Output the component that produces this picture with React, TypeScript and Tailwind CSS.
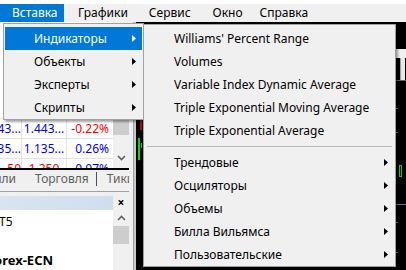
import React from "react";

const font = { fontFamily: '"Noto Sans", "Liberation Sans", sans-serif' };

const Arrow = ({ white }: { white?: boolean }) => (
  <svg width="4" height="7" viewBox="0 0 4 7" className="shrink-0">
    <path d="M0 0 L4 3.5 L0 7 Z" fill={white ? "#ffffff" : "#000000"} />
  </svg>
);

const MenuItem = ({
  label,
  active,
  sub,
}: {
  label: string;
  active?: boolean;
  sub?: boolean;
}) => (
  <div
    className={`flex items-center h-[23px] pr-[6px] pl-[29px] ${
      active ? "bg-[#0078d7] text-white" : "text-black"
    }`}
  >
    <span className="flex-1 whitespace-nowrap">{label}</span>
    {sub && <Arrow white={active} />}
  </div>
);

const rows = [
  { a: "43...", b: "1.443...", c: "-0.22%", ca: "text-[#0000ff]", cb: "text-[#0000ff]", cc: "text-[#ff0000]" },
  { a: "35...", b: "1.135...", c: "0.26%", ca: "text-[#0000ff]", cb: "text-[#0000ff]", cc: "text-[#0000ff]" },
  { a: "50", b: "1.250", c: "0.07%", ca: "text-[#ff0000]", cb: "text-[#ff0000]", cc: "text-[#0000ff]" },
];

const TabSep = () => <div className="w-px h-[14px] bg-[#505050]" />;

export default function App() {
  return (
    <div className="relative w-[406px] h-[270px] overflow-hidden bg-[#f0f0f0] text-[12px]" style={font}>
      {/* menu bar */}
      <div className="flex items-end h-[22px] bg-white">
        <div className="flex h-[18px] w-full items-center bg-[#f0f0f0]">
          <div className="flex items-center h-[18px] w-[64px] pl-[12px] bg-[#0078d7] text-white">Вставка</div>
          <span className="ml-[14px]">Графики</span>
          <span className="ml-[21px]">Сервис</span>
          <span className="ml-[22px]">Окно</span>
          <span className="ml-[17px]">Справка</span>
        </div>
      </div>

      {/* workspace */}
      <div className="flex h-[248px]">
        {/* left panel */}
        <div className="flex flex-col w-[129px]">
          <div className="flex h-[146px]">
            <div className="flex flex-col flex-1 pt-[96px] bg-white overflow-hidden">
              {rows.map((r, i) => (
                <div key={i} className="flex h-[20px] shrink-0 border-t border-[#e3e3e3] items-center">
                  <div className={`w-[22px] border-r border-[#e3e3e3] h-full flex items-center justify-end ${r.ca}`}>{r.a}</div>
                  <div className={`w-[45px] border-r border-[#e3e3e3] h-full flex items-center justify-center ${r.cb}`}>{r.b}</div>
                  <div className={`flex-1 h-full flex items-center justify-end pr-[4px] ${r.cc}`}>{r.c}</div>
                </div>
              ))}
            </div>
            <div className="flex flex-col w-[16px] bg-[#f0f0f0]">
              <div className="h-[96px]" />
              <div className="h-[17px] bg-[#cdcdcd]" />
              <div className="flex-1" />
              <div className="h-[20px] flex items-center justify-center">
                <svg width="9" height="6" viewBox="0 0 9 6">
                  <path d="M1 1 L4.5 4.5 L8 1" stroke="#606060" strokeWidth="1.6" fill="none" />
                </svg>
              </div>
            </div>
          </div>
          <div className="h-[2px] bg-black" />
          <div className="flex items-center h-[18px] text-[#606060] whitespace-nowrap overflow-hidden">
            <div className="w-[25px] shrink-0 overflow-hidden flex justify-end pr-[9px]">
              <span>лли</span>
            </div>
            <TabSep />
            <span className="ml-[10px]">Торговля</span>
            <div className="ml-[7px]"><TabSep /></div>
            <span className="ml-[10px]">Тики</span>
          </div>
          <div className="h-[4px]" />
          <div className="h-px bg-[#a0a0a0]" />
          <div className="h-[4px]" />
          <div className="flex items-center h-[14px]">
            <div className="flex-1 h-full bg-gradient-to-r from-[#d8e4f1] to-[#cfdeee]" />
            <div className="w-[16px] text-center font-bold text-[12px] leading-none">×</div>
          </div>
          <div className="flex flex-1">
            <div className="flex-1 bg-white pt-[3px] overflow-hidden">
              <div className="-ml-[1px]">T5</div>
              <div className="mt-[20px] font-bold text-[13px] -ml-[6px] whitespace-nowrap">orex-ECN</div>
            </div>
            <div className="w-[16px] flex flex-col">
              <div className="h-[16px] flex items-center justify-center">
                <svg width="9" height="6" viewBox="0 0 9 6">
                  <path d="M1 5 L4.5 1.5 L8 5" stroke="#606060" strokeWidth="1.6" fill="none" />
                </svg>
              </div>
              <div className="h-[18px] bg-[#cdcdcd]" />
            </div>
          </div>
        </div>

        {/* splitter */}
        <div className="w-[7px] flex">
          <div className="w-[4px]" />
          <div className="w-px bg-[#a0a0a0]" />
          <div className="w-[2px] bg-[#c8c8c8]" />
        </div>

        {/* chart */}
        <div className="flex-1 bg-black relative">
          <div className="absolute left-[4px] top-[88px] w-[2px] h-[20px] bg-[#c00000]" />
          <div className="absolute left-[2px] top-[116px] w-[2px] h-[22px] bg-[#00e000]" />
          <div className="absolute left-[5px] top-[121px] w-px h-[5px] bg-[#00e000]" />
          <div className="absolute right-[1px] top-[36px] w-[5px] h-[22px] bg-[#e8e8e8] border-l border-[#a0a0a0]" />
          <div className="absolute right-0 top-[27px] w-[10px] h-[9px] bg-[#f0f0f0]" />
          <div className="absolute right-0 top-[58px] w-[10px] h-[1px] bg-[#606060]" />
          <div className="absolute right-[4px] top-[143px] w-[3px] h-[12px] border border-[#00e000]" />
          <div className="absolute right-0 top-[182px] w-[10px] h-px bg-[#6070a0]" />
          <div className="absolute right-[8px] top-[86px] w-[2px] h-px bg-[#808080]" />
          <div className="absolute right-[8px] top-[110px] w-[2px] h-px bg-[#808080]" />
          <div className="absolute right-[8px] top-[200px] w-[2px] h-px bg-[#808080]" />
          <div className="absolute right-[8px] top-[230px] w-[2px] h-px bg-[#808080]" />
        </div>
      </div>

      {/* dropdown */}
      <div className="absolute left-[3px] top-[23px] w-[141px] h-[97px] bg-[#f0f0f0] border border-[#a0a0a0] py-[3px] px-px shadow-[2px_2px_2px_rgba(0,0,0,0.35)]">
        <MenuItem label="Индикаторы" active sub />
        <MenuItem label="Объекты" sub />
        <MenuItem label="Эксперты" sub />
        <MenuItem label="Скрипты" sub />
      </div>

      {/* submenu */}
      <div className="absolute left-[143px] top-[24px] w-[253px] h-[243px] bg-[#f0f0f0] border border-[#a0a0a0] py-[2px] px-px shadow-[2px_2px_2px_rgba(0,0,0,0.35)]">
        <MenuItem label="Williams' Percent Range" />
        <MenuItem label="Volumes" />
        <MenuItem label="Variable Index Dynamic Average" />
        <MenuItem label="Triple Exponential Moving Average" />
        <MenuItem label="Triple Exponential Average" />
        <div className="h-[9px] flex items-center px-[2px]">
          <div className="h-px w-full bg-[#b8b8b8]" />
        </div>
        <MenuItem label="Трендовые" sub />
        <MenuItem label="Осциляторы" sub />
        <MenuItem label="Объемы" sub />
        <MenuItem label="Билла Вильямса" sub />
        <MenuItem label="Пользовательские" sub />
      </div>
    </div>
  );
}
